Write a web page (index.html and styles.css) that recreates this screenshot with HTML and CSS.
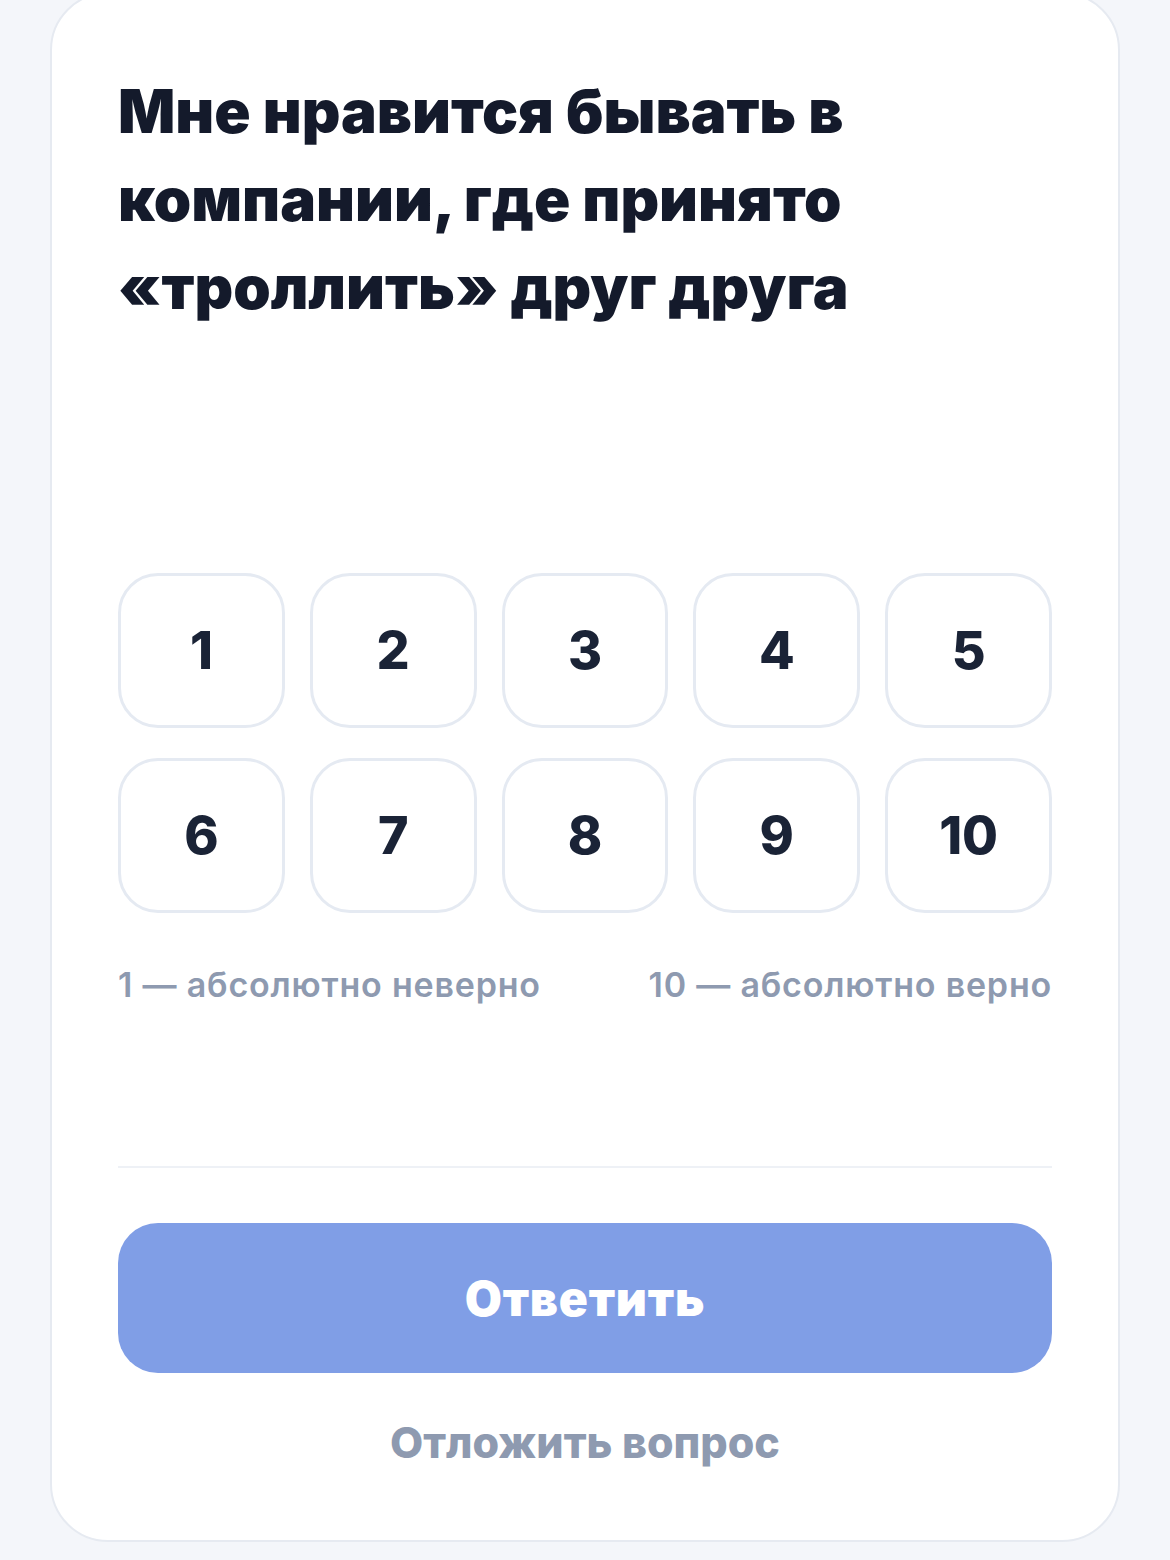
FILE: index.html
```html
<!DOCTYPE html>
<html lang="ru">
<head>
<meta charset="utf-8">
<title>Вопрос</title>
<link rel="stylesheet" href="styles.css">
</head>
<body>
<main class="card">
  <h1 class="question">Мне нравится бывать в компании, где принято «троллить» друг друга</h1>
  <div class="scale">
    <button class="opt">1</button>
    <button class="opt">2</button>
    <button class="opt">3</button>
    <button class="opt">4</button>
    <button class="opt">5</button>
    <button class="opt">6</button>
    <button class="opt">7</button>
    <button class="opt">8</button>
    <button class="opt">9</button>
    <button class="opt">10</button>
  </div>
  <div class="legend">
    <span>1 — абсолютно неверно</span>
    <span>10 — абсолютно верно</span>
  </div>
  <hr class="divider">
  <button class="submit">Ответить</button>
  <button class="later">Отложить вопрос</button>
</main>
</body>
</html>
```

FILE: styles.css
```css
html, body {
  margin: 0;
  padding: 0;
  background: #f4f6fa;
}
body {
  font-family: Inter, "Noto Sans", sans-serif;
  color: #141a2b;
  padding: 0 50px;
}
.card {
  box-sizing: border-box;
  margin-top: -8px;
  height: 1550px;
  background: #fff;
  border: 2px solid #e6eaf1;
  border-radius: 58px;
  padding: 73px 66px 0;
  display: flex;
  flex-direction: column;
}
.question {
  margin: 0;
  font-size: 60px;
  line-height: 88px;
  font-weight: 900;
  letter-spacing: 0;
  width: 780px;
}
.scale {
  margin-top: 242px;
  display: grid;
  grid-template-columns: repeat(5, 1fr);
  column-gap: 25px;
  row-gap: 30px;
}
.opt {
  box-sizing: border-box;
  height: 155px;
  border: 3px solid #e5eaf2;
  border-radius: 40px;
  background: #fff;
  font-family: Inter, "Noto Sans", sans-serif;
  font-size: 52px;
  font-weight: 800;
  color: #1a2336;
  padding: 0;
}
.legend {
  margin-top: 52px;
  display: flex;
  justify-content: space-between;
  font-size: 34px;
  line-height: 40px;
  font-weight: 600;
  letter-spacing: 0.8px;
  color: #8e9ab0;
}
.divider {
  margin: 161px 0 0;
  border: 0;
  height: 2px;
  background: #eef1f6;
}
.submit {
  margin-top: 55px;
  height: 150px;
  border: 0;
  border-radius: 40px;
  background: #809ee6;
  color: #fff;
  font-family: Inter, "Noto Sans", sans-serif;
  font-size: 48px;
  font-weight: 900;
  letter-spacing: 0.8px;
}
.later {
  margin-top: 41px;
  align-self: center;
  border: 0;
  background: none;
  padding: 0;
  font-family: Inter, "Noto Sans", sans-serif;
  font-size: 43px;
  line-height: 56px;
  font-weight: 800;
  color: #8e9ab0;
}
```
